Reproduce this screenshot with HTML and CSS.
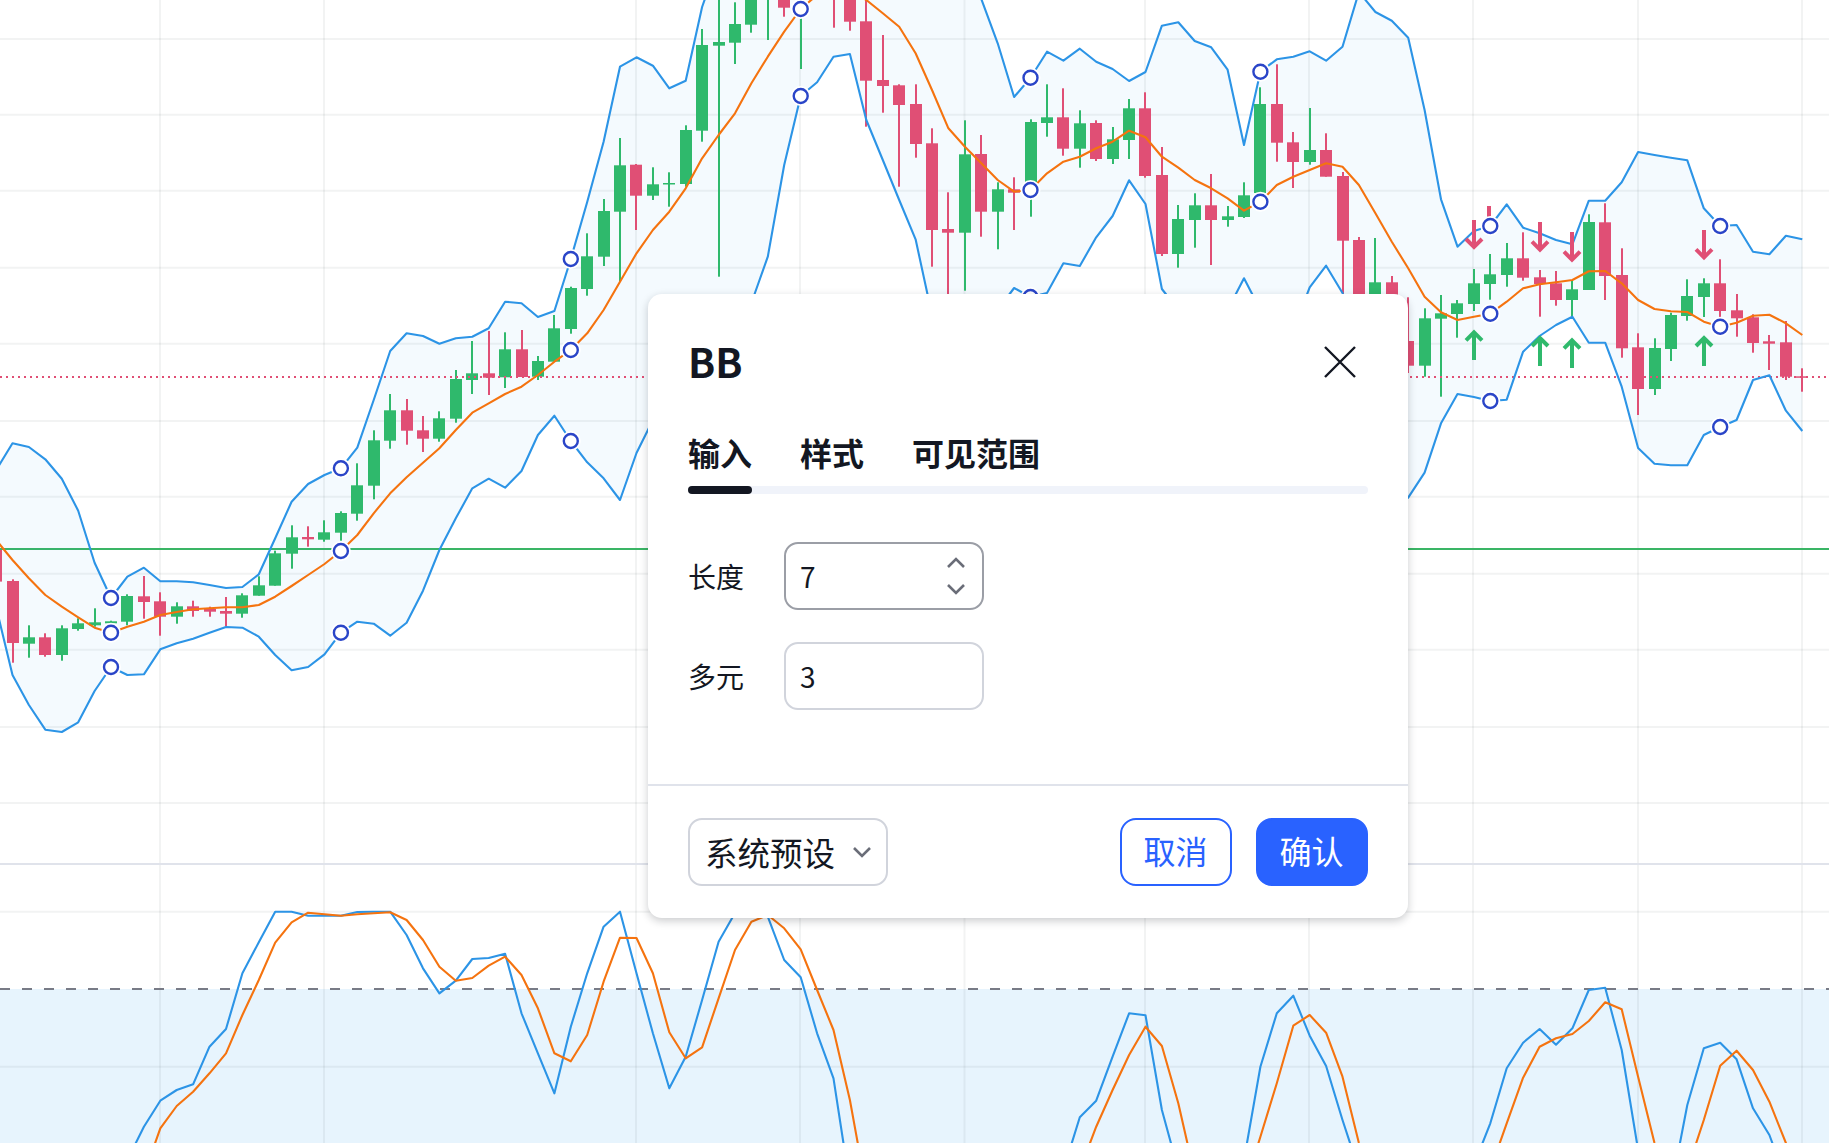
FILE: index.html
```html
<!DOCTYPE html>
<html lang="zh-CN">
<head>
    <meta charset="UTF-8">
    <title>BB</title>
    <link rel="stylesheet" href="styles.css">
</head>
<body>
    <div class="chart" id="chart"></div>

    <div class="dialog">
        <div class="dialog-head">
            <span class="dialog-title">BB</span>
            <svg class="close-icon" width="34" height="34" viewBox="0 0 34 34">
                <path d="M2 2 L32 32 M32 2 L2 32"></path>
            </svg>
        </div>

        <div class="tabs">
            <span class="tab">输入</span>
            <span class="tab">样式</span>
            <span class="tab">可见范围</span>
        </div>
        <div class="tab-track"><div class="tab-track-on"></div></div>

        <div class="fields">
            <div class="field">
                <span class="field-label">长度</span>
                <div class="num-input num-input-hover">
                    <span>7</span>
                    <div class="spinner">
                        <svg width="20" height="11" viewBox="0 0 20 11"><path d="M2 10 L10 2 L18 10"></path></svg>
                        <svg width="20" height="11" viewBox="0 0 20 11"><path d="M2 1 L10 9 L18 1"></path></svg>
                    </div>
                </div>
            </div>
            <div class="field">
                <span class="field-label">多元</span>
                <div class="num-input">
                    <span>3</span>
                </div>
            </div>
        </div>

        <div class="dialog-foot">
            <div class="preset">
                <span>系统预设</span>
                <svg width="20" height="11" viewBox="0 0 20 11"><path d="M2 1 L10 9 L18 1"></path></svg>
            </div>
            <div class="foot-buttons">
                <button class="btn btn-cancel">取消</button>
                <button class="btn btn-ok">确认</button>
            </div>
        </div>
    </div>

    <script src="chart.js"></script>
</body>
</html>
```

FILE: styles.css
```css
body { margin: 0; width: 1829px; height: 1143px; overflow: hidden; background: #fff; font-family: "Noto Sans CJK SC", sans-serif; color: #131722; }
.chart { width: 1829px; height: 1143px; }
.chart svg { display: block; }

.dialog { position: absolute; left: 648px; top: 294px; width: 760px; height: 624px; display: flex; flex-direction: column; background: #fff; border-radius: 14px; box-shadow: 0 3px 8px rgba(19, 23, 34, 0.22); }
.dialog-head { display: flex; align-items: center; justify-content: space-between; height: 56px; margin: 39px 51px 0 40px; }
.dialog-title { font-size: 40px; line-height: 56px; font-weight: 700; }
.close-icon { margin-top: 2px; }
.close-icon path { fill: none; stroke: #131722; stroke-width: 2.4; }

.tabs { display: flex; gap: 48px; margin: 39px 40px 0; }
.tab { font-size: 32px; line-height: 48px; font-weight: 700; }
.tab-track { height: 8px; margin: 10px 40px 0; border-radius: 4px; background: #f0f3fa; }
.tab-track-on { width: 64px; height: 8px; border-radius: 4px; background: #131722; }

.fields { display: flex; flex-direction: column; gap: 32px; margin: 48px 40px 0; }
.field { display: flex; align-items: center; height: 68px; }
.field-label { width: 96px; font-size: 28px; line-height: 40px; }
.num-input { box-sizing: border-box; width: 200px; height: 68px; display: flex; align-items: center; justify-content: space-between; padding: 0 16px 0 14px; border: 2px solid #d1d4dc; border-radius: 14px; font-size: 28px; }
.num-input-hover { border-color: #9b9ea6; }
.spinner { display: flex; flex-direction: column; gap: 16px; }
.spinner svg { display: block; }
.spinner path, .preset path { fill: none; stroke: #6a6d78; stroke-width: 2.6; }

.dialog-foot { display: flex; align-items: center; justify-content: space-between; margin-top: auto; padding: 32px 40px; border-top: 2px solid #e0e3eb; }
.preset { box-sizing: border-box; width: 200px; height: 68px; display: flex; align-items: center; justify-content: space-between; padding: 0 14px 0 15px; border: 2px solid #d1d4dc; border-radius: 14px; font-size: 32.5px; }
.preset span { margin-top: -1px; }
.foot-buttons { display: flex; gap: 24px; }
.btn { box-sizing: border-box; width: 112px; height: 68px; padding: 0 1px 4px 0; border-radius: 16px; font-family: inherit; font-size: 32px; }
.btn-cancel { border: 2px solid #2962ff; background: #fff; color: #2962ff; }
.btn-ok { border: 2px solid #2962ff; background: #2962ff; color: #fff; }
```

FILE: chart.js
```js
// bar spacing in px, first entry in the series below is bar -1
const X0 = 12.5;
const STEP = 16.42;
const xOf = i => X0 + STEP * i;

const GREEN = '#2fb96c';
const RED = '#e04f75';
const BLUE = '#2c94e6';
const ORANGE = '#f5730f';
const MARK = '#2a45c8';
const GRID = 'rgba(42,46,57,0.06)';

const gridY = [39, 114.7, 190.7, 267.7, 343.7, 421, 496.7, 573.7, 649.7, 727, 803, 911.7, 1066.7];
const gridX = [160, 324, 636, 800, 964.5, 1145, 1309, 1473, 1638, 1802];

const off = n => new Array(n).fill(-40);
const low = n => new Array(n).fill(1220);

const upper = [470, 443.3, 447, 459.3, 478.7, 510.7, 562.7, 598, 576.7, 567.7, 581.3,
    581.3, 582.3, 585, 588, 587, 574.3, 538.3, 501.7, 484, 475,
    468.3, 447.7, 400, 351, 333.3, 336, 343.7, 338.3, 336.7, 328.3,
    301.7, 303.3, 317, 311, 259, 202, 141.7, 66.7, 57.3, 65.7,
    88.3, 80.7, 7, ...off(16), -1,
    43.3, 97, 77.7, 51.7, 60.7, 48.7, 61.7, 69, 81, 72,
    25.7, 22.3, 41, 47.3, 69.7, 145, 71.7, 59.3, 56.7, 51.3,
    60.7, 46.7, -8, 12, 20.7, 37.7, 110, 199.3, 246.7, 231,
    226, 204.3, 227.7, 233.3, 240, 244.3, 200.7, 200.7, 182.3, 152,
    155, 157.7, 160.3, 208.3, 226, 225, 251.7, 254.3, 235.7, 239.3];

const lower = [607, 675, 705, 729.7, 732, 722.3, 691, 667, 675, 674.3, 649.3,
    643.3, 638.7, 632.7, 627, 627.7, 636.7, 655, 670.3, 667, 654.3,
    632.7, 621.7, 623.7, 635.7, 622.7, 590.7, 550, 518.3, 488.3, 478.7,
    487.7, 471, 435, 415.7, 441, 462.3, 478.3, 500, 453, 420,
    400, 380, 360, 340, 320, 303, 256.7, 165, 96, 82.3,
    56.7, 54, 120, 160, 200, 239.3, 315, 330, 330, 330,
    310, 288, 297, 293, 263.3, 266, 237.3, 216, 180.3, 204,
    289, 310, 330, 330, 310, 278.3, 310, 330, 330, 287.3,
    265.7, 293, 340, 450, 510, 497.7, 472.7, 423.3, 394, 397,
    401, 399.7, 351.7, 336, 325, 316.7, 342.7, 342.7, 386.7, 448,
    463.7, 465.3, 465.3, 435, 427, 420, 380, 375.3, 410.7, 431];

const middle = [540, 560, 578.3, 595, 606.7, 617.3, 627.7, 632.7, 626.7, 621.7, 615,
    612, 609.3, 608.3, 607.3, 607.3, 605, 596.7, 586, 575, 564,
    551, 535, 513.3, 493.3, 477.3, 462.7, 448.3, 430, 412.7, 403.3,
    394, 386.7, 375, 361.7, 350, 333.3, 310, 281.7, 253.3, 230,
    211.7, 188.3, 158.3, 135, 113.3, 83.3, 56.7, 31.7, 9, -5,
    -20, -10, 0, 13.3, 26.7, 53.3, 90, 128.3, 146.7, 163.3,
    180, 191.7, 190, 173.3, 161.7, 156.7, 148.3, 141.7, 130.7, 137.3,
    156.7, 167.7, 180, 188.3, 198.3, 210.7, 201.7, 185, 176.7, 170,
    163.3, 166.7, 185, 213.3, 241.7, 268.3, 296.7, 312.3, 320, 316.7,
    313.7, 301.7, 288.3, 284.3, 282.3, 280, 271.3, 271, 283.3, 300,
    309, 311.3, 312, 321.7, 326.7, 322.7, 315.7, 314.7, 323.3, 335];

// oscillator pane, these two start at bar 7
const oscBlue = [1160, 1126.7, 1100.7,
    1090, 1084.3, 1046.7, 1029, 973.3, 942.3, 911.7, 911.7, 915.7, 915.7,
    915.7, 912, 911.7, 911.7, 935, 968.3, 993.3, 980.7, 959, 958,
    953.7, 1013.3, 1053.3, 1093.3, 1026.7, 973.3, 926.7, 911.7, 973.3, 1033.3,
    1088.3, 1056.7, 1000, 941.7, 913, 911.7, 916.7, 960, 977.3, 1033.3,
    1078.3, 1185, ...low(12), 1170, 1117.3, 1100.7, 1056.7, 1013.3, 1015.3,
    1110, 1170, 1220, 1220, 1220, 1160, 1066.7, 1013.3, 995.7, 1035.7,
    1066, 1120, 1170, ...low(6), 1165,
    1123.3, 1068.3, 1042.7, 1029, 1044.7, 1028.3, 990, 987.7, 1050, 1150,
    1220, 1190, 1105, 1048.3, 1042.7, 1059.3, 1108.3, 1135, 1180, 1220];

const oscOrange = [1220, 1175, 1128.3,
    1106, 1091.7, 1073.3, 1053.3, 1015, 980, 942.7, 922.3, 912.7, 914.3,
    915.7, 914.3, 913.3, 912.3, 920, 940, 966.7, 980.7, 978, 965.7,
    956.7, 975, 1008.3, 1053.3, 1061.3, 1035, 981.7, 937.7, 938, 973.3,
    1032.3, 1058.3, 1047.3, 998.3, 950, 921.7, 915, 928.3, 949.3, 990,
    1030, 1100, 1190, ...low(12), 1170, 1126.7, 1090, 1055, 1026.7,
    1046, 1103.3, 1175, 1220, 1220, 1190, 1136.7, 1083.3, 1025.7, 1015,
    1032.7, 1076.7, 1143, 1200, ...low(6),
    1170, 1123.3, 1077.7, 1046.7, 1038.3, 1034, 1021, 1002.3, 1009.3, 1076.7,
    1143, 1200, 1170, 1120, 1065.7, 1050.7, 1070, 1101.7, 1143, 1190];

// [bar, bodyTop, bodyBottom, wickTop, wickBottom, colour]
const candles = [
    [-1, 550, 581.6, 540, 590, 'r'], [0, 581, 643, 579.3, 662.7, 'r'], [1, 637.3, 643.7, 625.3, 657.7, 'g'],
    [2, 637.3, 655, 633.3, 656.7, 'r'], [3, 628.3, 655, 625.3, 660.7, 'g'], [4, 623.3, 629, 618.3, 630.7, 'g'],
    [5, 622.3, 625.3, 608.3, 626.7, 'g'], [6, 621.3, 623.3, 620.7, 624, 'g'], [7, 596, 621.7, 594.3, 625.3, 'g'],
    [8, 596.3, 602, 576, 618.7, 'r'], [9, 601.3, 616.7, 592.3, 635.7, 'r'], [10, 606.3, 616.7, 602.3, 623.7, 'g'],
    [11, 606.3, 611, 600.7, 616.7, 'r'], [12, 609, 611.7, 606.7, 616.7, 'r'], [13, 611, 613.7, 597, 626, 'r'],
    [14, 595.3, 613.7, 593.3, 617.7, 'g'], [15, 585.3, 595.7, 576.3, 595.7, 'g'], [16, 553.3, 585.7, 550.7, 585.7, 'g'],
    [17, 537.3, 553.7, 525.3, 568.7, 'g'], [18, 537, 539.3, 526.3, 546.7, 'r'], [19, 532.3, 539.7, 520.3, 541.7, 'g'],
    [20, 513, 532.7, 511.3, 540.7, 'g'], [21, 485.3, 513.7, 463.3, 520.7, 'g'], [22, 440.3, 485.7, 430.3, 499.3, 'g'],
    [23, 410.3, 440.7, 394, 448.7, 'g'], [24, 410.3, 430.7, 399, 444.7, 'r'], [25, 430.3, 438.7, 416, 452, 'r'],
    [26, 418.3, 438.7, 411.3, 441.7, 'g'], [27, 379, 418.7, 370, 422.7, 'g'], [28, 373.3, 380, 341, 394, 'g'],
    [29, 373.3, 377.7, 331, 395, 'r'], [30, 349.3, 377.3, 332.3, 388, 'g'], [31, 349.3, 377, 330, 377, 'r'],
    [32, 361, 376.7, 356, 380, 'g'], [33, 328.3, 361.7, 315, 361.7, 'g'], [34, 288, 329, 286.7, 333.7, 'g'],
    [35, 256.3, 289, 233.3, 295.7, 'g'], [36, 211, 256.7, 199, 266, 'g'], [37, 165.3, 211.7, 138, 281.7, 'g'],
    [38, 164.7, 195.7, 164, 230, 'r'], [39, 184.3, 195.7, 167.3, 200, 'g'], [40, 183, 184.5, 172.3, 206.7, 'g'],
    [41, 130, 184, 125.3, 186.7, 'g'], [42, 45, 130.7, 29, 141.7, 'g'], [43, 42, 45.7, -5, 276.7, 'g'],
    [44, 24, 42.7, 2.3, 64, 'g'], [45, -10, 24.7, -15, 32.7, 'g'], [46, -30, -10, -30, 40, 'g'],
    [47, -10, 7.7, -15, 16.7, 'r'], [48, -20, -5, -25, 69, 'g'], [50, -30, -10, -30, 27.7, 'r'],
    [51, -10, 21.7, -15, 30.7, 'r'], [52, 21.3, 80.7, -5, 126.7, 'r'], [53, 80, 86, 35, 112.7, 'r'],
    [54, 85.3, 105, 84.3, 186.7, 'r'], [55, 104, 144, 84.3, 157.7, 'r'], [56, 143.3, 230, 128.3, 266.7, 'r'],
    [57, 229, 232.7, 192.3, 300, 'r'], [58, 154.3, 232.7, 120.3, 290.7, 'g'], [59, 154, 211.7, 135, 236.7, 'r'],
    [60, 189.3, 211.7, 182.3, 249.3, 'g'], [61, 189.3, 192.7, 177.3, 230, 'r'], [62, 122, 182.7, 119.3, 216.7, 'g'],
    [63, 117.3, 123, 84.3, 136.7, 'g'], [64, 117.3, 148.7, 88.3, 155.7, 'r'], [65, 123.3, 148.7, 110.3, 167.7, 'g'],
    [66, 123, 159, 120.3, 161, 'r'], [67, 139.3, 159, 127, 164, 'g'], [68, 108.3, 140, 99, 159, 'g'],
    [69, 108.3, 176, 92.3, 177.7, 'r'], [70, 175, 254, 147, 256, 'r'], [71, 219, 254, 205, 267.7, 'g'],
    [72, 205.3, 220, 193.3, 247.7, 'g'], [73, 205.3, 220, 174, 265, 'r'], [74, 216.3, 220, 206, 226.7, 'g'],
    [75, 195.3, 217, 182.3, 218, 'g'], [76, 104, 193, 87.3, 200, 'g'], [77, 104, 142.7, 64.3, 161.7, 'r'],
    [78, 142.3, 162, 132, 188, 'r'], [79, 150, 162, 108, 164.7, 'g'], [80, 150, 176.7, 133.3, 176.7, 'r'],
    [81, 176, 240.7, 172, 300, 'r'], [82, 240, 330, 237, 330, 'r'], [83, 282.3, 330, 238, 330, 'g'],
    [84, 282.3, 330, 276, 330, 'r'], [85, 341, 365.7, 297.3, 373, 'r'], [86, 318.3, 365.7, 308.3, 376.7, 'g'],
    [87, 313.3, 318.7, 295, 396.7, 'g'], [88, 303.3, 314, 300, 337.7, 'g'], [89, 283.3, 304, 269, 311, 'g'],
    [90, 274.3, 284, 254, 299.7, 'g'], [91, 258.3, 275, 243, 286.7, 'g'], [92, 258.3, 277.7, 232.3, 280.7, 'r'],
    [93, 277.3, 284, 270, 316.7, 'r'], [94, 283.3, 300, 271, 305.7, 'r'], [95, 289.3, 300, 280, 316.7, 'g'],
    [96, 222, 290, 214.3, 290, 'g'], [97, 222.3, 276, 203.3, 300, 'r'], [98, 275, 348.3, 248.3, 357.7, 'r'],
    [99, 347.3, 389, 333.3, 415, 'r'], [100, 348, 389, 338.3, 395, 'g'], [101, 315, 349, 312.7, 361, 'g'],
    [102, 296, 316, 279.3, 320.7, 'g'], [103, 283.3, 297, 278.3, 317, 'g'], [104, 283.3, 311, 259.3, 317.3, 'r'],
    [105, 310.3, 318.3, 294, 336.7, 'r'], [106, 317.3, 343, 314.3, 352.7, 'r'], [107, 341.3, 343.7, 335, 370, 'r'],
    [108, 342.3, 376.7, 321, 380, 'r'], [109, 376.3, 377.8, 368.3, 391.7, 'r']
];

const markers = [
    [6, 598], [6, 632.7], [6, 667],
    [20, 468.3], [20, 551], [20, 632.7],
    [34, 259], [34, 350], [34, 441],
    [48, 9], [48, 96],
    [62, 77.7], [62, 190], [62, 297],
    [76, 71.7], [76, 201.7],
    [90, 226], [90, 313.7], [90, 401],
    [104, 226], [104, 326.7], [104, 427]
];

// [x, tail y, tip y]
const downArrows = [[1474, 220, 250], [1540, 222, 252.7], [1572, 232, 262.7], [1704, 230, 260.3]];
const upArrows = [[1474, 360, 329.3], [1540, 366, 335], [1572, 368, 337.3], [1704, 366, 335]];

const hLine = (y, color, w, extra) =>
    `<line x1="0" x2="1829" y1="${y}" y2="${y}" stroke="${color}" stroke-width="${w}" ${extra || ''}/>`;

function points(series, firstBar) {
    return series.map((y, k) => `${xOf(k + firstBar).toFixed(1)},${y}`).join(' ');
}

function polyline(series, firstBar, color) {
    return `<polyline points="${points(series, firstBar)}" fill="none" stroke="${color}" stroke-width="2.1" stroke-linejoin="round"/>`;
}

function candle(c) {
    const x = Math.round(xOf(c[0]));
    const color = c[5] === 'g' ? GREEN : RED;
    return `<rect x="${x - 1}" y="${c[3]}" width="2" height="${c[4] - c[3]}" fill="${color}"/>` +
        `<rect x="${x - 6}" y="${c[1]}" width="12" height="${c[2] - c[1]}" fill="${color}"/>`;
}

function arrow(a, color) {
    const dir = a[2] > a[1] ? 1 : -1;
    const tip = a[2] - dir * 3;
    const wing = tip - dir * 8;
    return `<path d="M${a[0]} ${a[1]} L${a[0]} ${tip} M${a[0] - 8} ${wing} L${a[0]} ${tip} L${a[0] + 8} ${wing}" fill="none" stroke="${color}" stroke-width="4"/>`;
}

let svg = '<svg width="1829" height="1143" viewBox="0 0 1829 1143">';

svg += '<rect x="0" y="989" width="1829" height="154" fill="#e7f4fd"/>';
gridY.forEach(y => { svg += hLine(y, GRID, 2); });
gridX.forEach(x => { svg += `<line x1="${x}" x2="${x}" y1="0" y2="1143" stroke="${GRID}" stroke-width="2"/>`; });
svg += hLine(864, '#e0e3eb', 2);
svg += hLine(549, '#3ab565', 2);

const bandBack = lower.map((y, k) => `${xOf(k - 1).toFixed(1)},${y}`).reverse().join(' ');
svg += `<polygon points="${points(upper, -1)} ${bandBack}" fill="#2196f3" fill-opacity="0.05"/>`;

candles.forEach(c => { svg += candle(c); });
svg += hLine(377, RED, 2, 'stroke-dasharray="2 4"');

svg += polyline(upper, -1, BLUE);
svg += polyline(lower, -1, BLUE);
svg += polyline(middle, -1, ORANGE);

downArrows.forEach(a => { svg += arrow(a, RED); });
upArrows.forEach(a => { svg += arrow(a, GREEN); });
svg += `<rect x="1487" y="206" width="4" height="24" fill="${RED}"/>`;

markers.forEach(m => {
    const cx = xOf(m[0]).toFixed(1);
    svg += `<circle cx="${cx}" cy="${m[1]}" r="7" fill="#fff" stroke="#fff" stroke-width="6"/>`;
    svg += `<circle cx="${cx}" cy="${m[1]}" r="7" fill="#fff" stroke="${MARK}" stroke-width="2.4"/>`;
});

svg += hLine(989, '#787b86', 2, 'stroke-dasharray="10 12"');
svg += polyline(oscBlue, 7, BLUE);
svg += polyline(oscOrange, 7, ORANGE);
svg += '</svg>';

document.getElementById('chart').innerHTML = svg;
```
